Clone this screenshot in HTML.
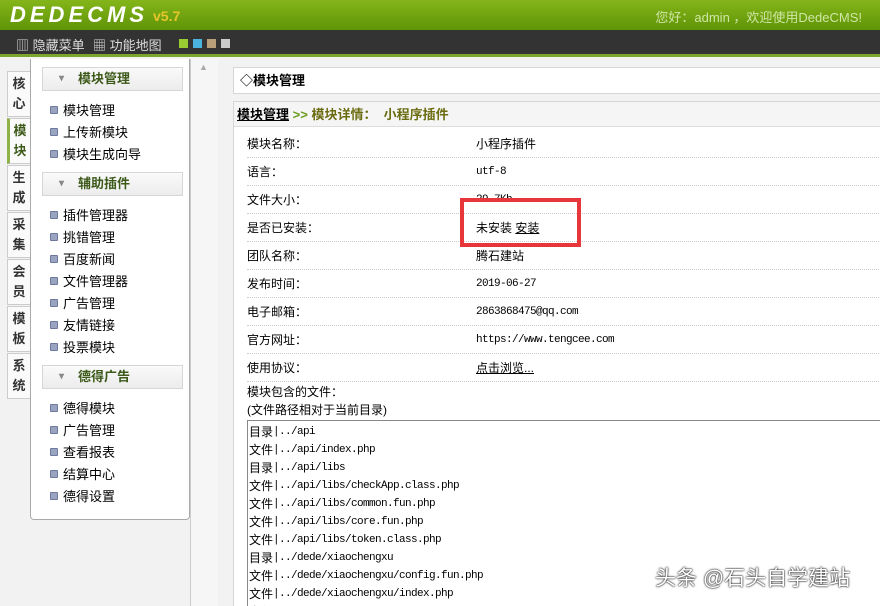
<!DOCTYPE html>
<html><head><meta charset="utf-8"><style>
*{margin:0;padding:0;box-sizing:border-box}
html{width:880px;height:606px;overflow:hidden}
body{width:880px;height:606px;overflow:hidden;background:#f2f2f2;font-family:"Liberation Sans","Noto Sans CJK SC",sans-serif;font-size:12px;color:#000;position:relative}
.a{position:absolute}
#hd{left:0;top:0;width:880px;height:30px;background:linear-gradient(#84b51a,#5f9407)}
#logo{left:10px;top:2px;font:italic bold 22px "Liberation Sans",sans-serif;color:#fff;letter-spacing:4px}
#ver{left:153px;top:8px;font:bold 14px "Liberation Sans",sans-serif;color:#e8c62a}
#hi{right:18px;top:7px;color:#cfe6a4;font-size:13px}
#bar{left:0;top:30px;width:880px;height:27px;background:#333;border-bottom:3px solid #7aa62e}
#bar span{position:absolute;top:5px;color:#ddd;font-size:13px}
.sq{position:absolute;top:39px;width:9px;height:9px}
#tabs div{position:absolute;left:7px;width:24px;height:46px;background:#fafafa;border:1px solid #ccc;font-size:13px;font-weight:bold;color:#333;text-align:center;line-height:20px;padding-top:2px}
#nav{left:30px;top:59px;width:160px;height:461px;background:#fff;border:1px solid #aaa;border-top:none;border-radius:0 0 4px 4px}
.h{position:absolute;left:11px;width:141px;height:24px;border:1px solid #d6d6d6;background:linear-gradient(#fafafa,#ececec);font-weight:bold;font-size:13px;color:#3d5a1a;line-height:22px;padding-left:35px}
.h:before{content:"▾";position:absolute;left:16px;color:#888;font-size:10px}
.it{position:absolute;left:32px;font-size:13px}
.it:before{content:"";position:absolute;left:-13px;top:6px;width:6px;height:6px;background:#9aa4c0;border:1px solid #6d7aa0;border-radius:1px}
#gut{left:190px;top:59px;width:28px;height:547px;background:#f6f6f6;border-left:1px solid #ccc}
#b1{left:233px;top:67px;width:660px;height:27px;background:#fff;border:1px solid #d6d6d6;font-weight:bold;font-size:13px;line-height:26px;padding-left:6px}
#b2{left:233px;top:101px;width:660px;height:520px;background:#fff;border:1px solid #d6d6d6}
#b2h{left:0;top:0;width:660px;height:25px;background:#f5f5f5;border-bottom:1px solid #ddd;font-weight:bold;font-size:13px;line-height:25px;padding-left:3px;color:#6b6b10}
.r{position:absolute;left:247px;width:640px;height:28px;border-bottom:1px dotted #ccc;font-size:12px;line-height:28px}
.r b{font-weight:normal;position:absolute;left:229px;font-family:"Liberation Mono","Noto Sans CJK SC",monospace;font-size:11px;letter-spacing:-0.6px}
#ta{left:247px;top:420px;width:640px;height:200px;overflow:hidden;border:1px solid #888;background:#fff;padding:2px 1px}
#ta div{height:18px;line-height:18px;white-space:nowrap;font-family:"Liberation Mono",monospace;font-size:11px;letter-spacing:-0.6px}
#ta i{font-style:normal;font-family:"Liberation Sans","Noto Sans CJK SC",sans-serif;font-size:12px;letter-spacing:0;line-height:18px;vertical-align:top}
#red{left:460px;top:198px;width:121px;height:49px;border:4px solid #e8373a}
#wm{left:655px;top:562px;font-size:21px;color:#fff;text-shadow:0 0 2px #000,0 0 1px #000}
</style></head><body>
<div id="hd" class="a"></div>
<div id="logo" class="a">DEDECMS</div><div id="ver" class="a">v5.7</div>
<div id="hi" class="a">您好：admin ，欢迎使用DedeCMS!</div>
<div id="bar" class="a"><span style="left:16px">▥ 隐藏菜单</span><span style="left:93px">▦ 功能地图</span></div>
<div class="sq" style="left:179px;background:#9c3"></div><div class="sq" style="left:193px;background:#4ab3e0"></div><div class="sq" style="left:207px;background:#b9a07a"></div><div class="sq" style="left:221px;background:#ccc"></div>
<div id="tabs"><div style="top:71px">核<br>心</div><div style="top:118px;border-left:3px solid #8fb14a;color:#3d5a1a">模<br>块</div><div style="top:165px">生<br>成</div><div style="top:212px">采<br>集</div><div style="top:259px">会<br>员</div><div style="top:306px">模<br>板</div><div style="top:353px">系<br>统</div></div>
<div id="nav" class="a">
<div class="h" style="top:8px">模块管理</div>
<div class="it" style="top:41px">模块管理</div><div class="it" style="top:63px">上传新模块</div><div class="it" style="top:85px">模块生成向导</div>
<div class="h" style="top:113px">辅助插件</div>
<div class="it" style="top:146px">插件管理器</div><div class="it" style="top:168px">挑错管理</div><div class="it" style="top:190px">百度新闻</div><div class="it" style="top:212px">文件管理器</div><div class="it" style="top:234px">广告管理</div><div class="it" style="top:256px">友情链接</div><div class="it" style="top:278px">投票模块</div>
<div class="h" style="top:306px">德得广告</div>
<div class="it" style="top:339px">德得模块</div><div class="it" style="top:361px">广告管理</div><div class="it" style="top:383px">查看报表</div><div class="it" style="top:405px">结算中心</div><div class="it" style="top:427px">德得设置</div>
</div>
<div id="gut" class="a"><span style="position:absolute;left:8px;top:3px;color:#aaa;font-size:9px">▲</span></div>
<div id="b1" class="a">◇模块管理</div>
<div id="b2" class="a"><div id="b2h" class="a"><u style="color:#000">模块管理</u> <span style="color:#6b9a1a">&gt;&gt;</span> 模块详情：&nbsp; 小程序插件</div></div>
<div class="r" style="top:130px">模块名称：<b style="font-family:'Liberation Sans','Noto Sans CJK SC',sans-serif;font-size:12px;letter-spacing:0">小程序插件</b></div>
<div class="r" style="top:158px">语言：<b>utf-8</b></div>
<div class="r" style="top:186px">文件大小：<b>29.7Kb</b></div>
<div class="r" style="top:214px">是否已安装：<b style="font-family:'Liberation Sans','Noto Sans CJK SC',sans-serif;font-size:12px;letter-spacing:0">未安装 <u>安装</u></b></div>
<div class="r" style="top:242px">团队名称：<b style="font-family:'Liberation Sans','Noto Sans CJK SC',sans-serif;font-size:12px;letter-spacing:0">腾石建站</b></div>
<div class="r" style="top:270px">发布时间：<b>2019-06-27</b></div>
<div class="r" style="top:298px">电子邮箱：<b>2863868475@qq.com</b></div>
<div class="r" style="top:326px">官方网址：<b>https://www.tengcee.com</b></div>
<div class="r" style="top:354px">使用协议：<b style="font-family:'Liberation Sans','Noto Sans CJK SC',sans-serif;font-size:12px;letter-spacing:0"><u>点击浏览...</u></b></div>
<div class="a" style="left:247px;top:383px;line-height:18px">模块包含的文件：<br>(文件路径相对于当前目录)</div>
<div id="ta" class="a"><div><i>目录</i>|../api</div><div><i>文件</i>|../api/index.php</div><div><i>目录</i>|../api/libs</div><div><i>文件</i>|../api/libs/checkApp.class.php</div><div><i>文件</i>|../api/libs/common.fun.php</div><div><i>文件</i>|../api/libs/core.fun.php</div><div><i>文件</i>|../api/libs/token.class.php</div><div><i>目录</i>|../dede/xiaochengxu</div><div><i>文件</i>|../dede/xiaochengxu/config.fun.php</div><div><i>文件</i>|../dede/xiaochengxu/index.php</div><div><i>文件</i>|</div></div>
<div id="red" class="a"></div>
<div id="wm" class="a">头条 @石头自学建站</div>
</body></html>
